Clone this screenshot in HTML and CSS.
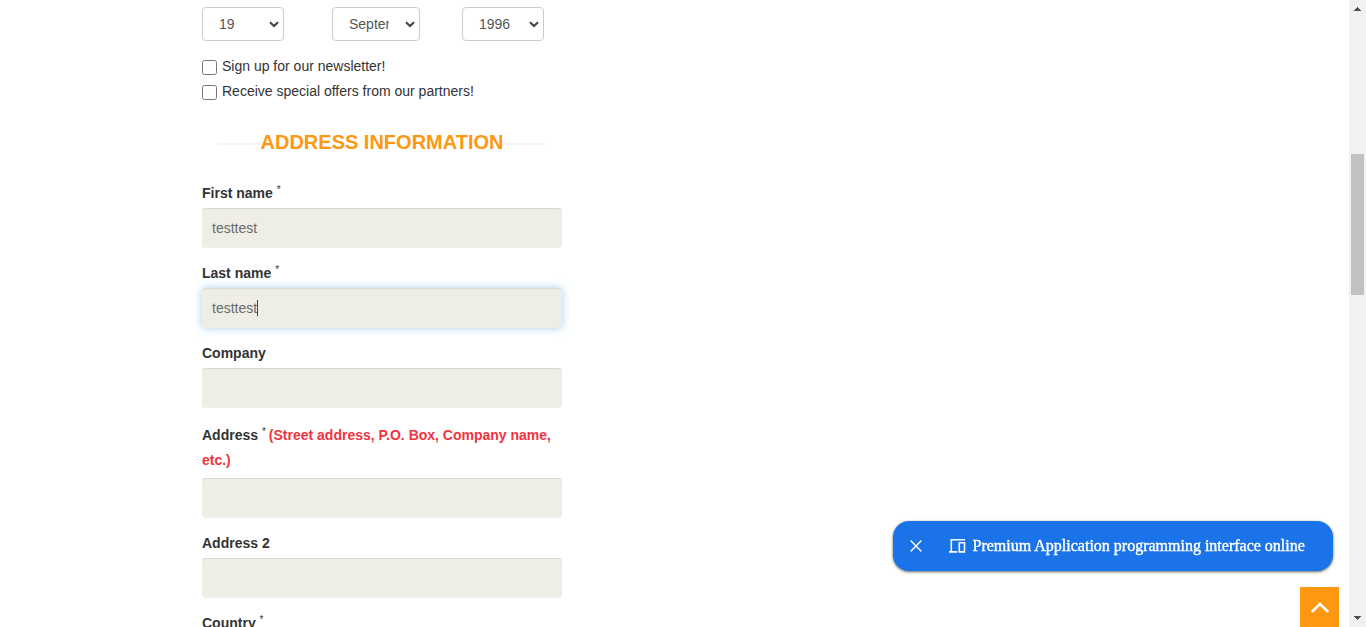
FILE: index.html
```html
<!DOCTYPE html>
<html lang="en">
<head>
<meta charset="utf-8">
<title>Create an account</title>
<link rel="stylesheet" href="styles.css">
</head>
<body>
<div class="page">
  <main class="form">
    <div class="birth">
      <div class="select"><span class="value">19</span><svg class="chevron" viewBox="0 0 10 7"><path d="M1 1.2 5 5l4-3.8"/></svg></div>
      <div class="select month"><span class="value">September</span><svg class="chevron" viewBox="0 0 10 7"><path d="M1 1.2 5 5l4-3.8"/></svg></div>
      <div class="select"><span class="value">1996</span><svg class="chevron" viewBox="0 0 10 7"><path d="M1 1.2 5 5l4-3.8"/></svg></div>
    </div>
    <label class="check"><input type="checkbox">Sign up for our newsletter!</label>
    <label class="check"><input type="checkbox">Receive special offers from our partners!</label>
    <h3 class="heading"><span>ADDRESS INFORMATION</span></h3>
    <div class="field"><label>First name <sup>*</sup></label><div class="control">testtest</div></div>
    <div class="field"><label>Last name <sup>*</sup></label><div class="control focused">testtest<i class="caret"></i></div></div>
    <div class="field"><label>Company</label><div class="control"></div></div>
    <div class="field long"><label>Address <sup>*</sup><span class="hint">(Street address, P.O. Box, Company name, etc.)</span></label><div class="control"></div></div>
    <div class="field"><label>Address 2</label><div class="control"></div></div>
    <div class="field"><label>Country <sup>*</sup></label></div>
  </main>
  <div class="scrollbar">
    <svg class="arrow" viewBox="0 0 7 4"><path d="M3 0h1v1h1v1h1v1h1v1H0V3h1V2h1V1h1z"/></svg>
    <div class="thumb"></div>
    <svg class="arrow" viewBox="0 0 7 4"><path d="M0 0h7v1H6v1H5v1H4v1H3V3H2V2H1V1H0z"/></svg>
  </div>
</div>
<aside class="toast">
  <svg class="close" viewBox="0 0 12 12"><path d="M.6.6l10.8 10.8M11.4.6.6 11.4"/></svg>
  <svg class="devices" viewBox="0 0 17 14"><path d="M16 .8H2.300V12.500M0 12.900h8.300M10.300 3.700h5.200v9.200h-5.200z"/></svg>
  <span class="message">Premium Application programming interface online</span>
</aside>
<div class="to-top"><svg viewBox="0 0 18 11"><path d="M1.500 9.200 9 2l7.500 7.200"/></svg></div>
</body>
</html>
```
FILE: styles.css
```css
* { box-sizing: border-box; }
body {
  margin: 0;
  overflow: hidden;
  background: #fff;
  color: #333;
  font: 14px/25px "Liberation Sans", Arial, sans-serif;
}
.page { display: flex; justify-content: space-between; height: 627px; overflow: hidden; }
.form { width: 360px; margin-left: 202px; padding-top: 7px; }
.birth { display: flex; gap: 48px; margin-bottom: 13px; }
.select {
  display: flex;
  align-items: center;
  justify-content: space-between;
  width: 82px;
  height: 34px;
  padding: 0 4px 0 16px;
  border: 1px solid #ccc;
  border-radius: 4px;
  color: #555;
}
.select.month { width: 88px; margin-right: -6px; }
.value { width: 40px; overflow: hidden; white-space: nowrap; }
.birth .chevron { flex: none; width: 10px; height: 7px; }
.chevron path { fill: none; stroke: #444; stroke-width: 2.100; }
.check { display: flex; height: 25px; }
.check input { flex: none; width: 15px; height: 15px; margin: 6px 5px 0 0; }
.heading {
  display: flex;
  align-items: center;
  height: 30px;
  margin: 23px 15px 0;
  color: #fe9811;
  font-size: 20px;
  line-height: 30px;
}
.heading::before, .heading::after { content: ""; flex: 1; height: 2px; margin-top: 3px; background: #f5f5f5; }
.heading + .field { margin-top: 24px; }
.field { padding-bottom: 15px; }
.field label { display: block; height: 25px; margin-bottom: 2px; font-weight: bold; }
.field + .field { margin-top: -2px; }
.field.long { margin-top: 0; }
.field.long label { height: 50px; margin-bottom: 5px; }
.field sup { position: relative; top: -5px; font-size: 10px; font-weight: normal; line-height: 0; vertical-align: baseline; }
.hint { margin-left: 3px; color: #f13340; }
.control {
  display: flex;
  align-items: center;
  height: 40px;
  padding: 0 10px;
  border-radius: 4px;
  background: #efeee6;
  box-shadow: inset 0 1px 1px rgba(0, 0, 0, .1);
  color: #6b6b67;
}
.control.focused { box-shadow: inset 0 1px 1px rgba(0, 0, 0, .075), 0 0 8px rgba(102, 175, 233, .6); }
.caret { width: 1px; height: 16px; background: #444; }
.scrollbar {
  display: flex;
  flex-direction: column;
  align-items: center;
  width: 17px;
  padding: 7px 0;
  background: #f1f1f1;
}
.arrow { width: 7px; height: 4px; fill: #505050; shape-rendering: crispEdges; }
.thumb { width: 13px; height: 141px; margin: 143px 0 auto; background: #c1c1c1; }
.toast {
  position: fixed;
  top: 521px;
  left: 893px;
  display: flex;
  align-items: center;
  width: 440px;
  height: 50px;
  padding-left: 17px;
  border-radius: 16px;
  background: #1a73e8;
  box-shadow: 0 1px 3px rgba(0, 0, 0, .6);
  color: #fff;
}
.close { width: 12px; height: 12px; margin-right: 27px; fill: none; stroke: #fff; stroke-width: 1.400; }
.devices { width: 17px; height: 14px; margin-right: 6.5px; fill: none; stroke: #fff; stroke-width: 1.600; }
.message { font: 16px/20px "Liberation Serif", "Times New Roman", serif; -webkit-text-stroke: .4px #fff; white-space: nowrap; }
.to-top {
  position: fixed;
  top: 587px;
  left: 1300px;
  display: flex;
  align-items: center;
  justify-content: center;
  width: 39px;
  height: 40px;
  background: #fe9811;
}
.to-top svg { width: 18px; height: 11px; margin-top: 1px; fill: none; stroke: #fff; stroke-width: 2.600; stroke-linecap: round; }
```
